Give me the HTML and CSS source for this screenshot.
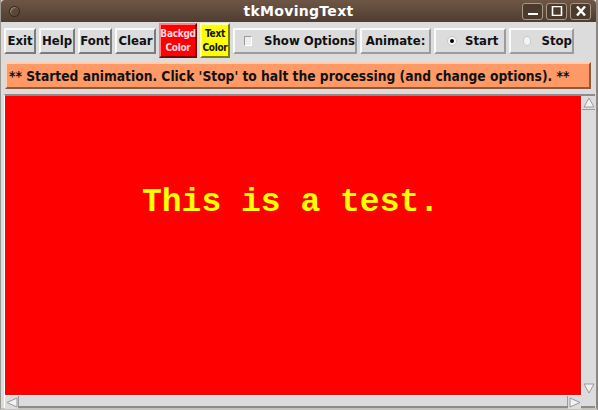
FILE: index.html
```html
<!DOCTYPE html>
<html lang="en">
<head>
	<meta charset="UTF-8">
	<title>tkMovingText</title>
	<link rel="stylesheet" href="styles.css">
</head>
<body>
	<div class="window">
		<div class="titlebar">
			<div class="tb_left"><span class="menu_dot"></span></div>
			<span class="title">tkMovingText</span>
			<div class="wm_btns">
				<span class="wm_btn">
					<svg width="12" height="10" viewBox="0 0 12 10"><rect x="1" y="7" width="10" height="2" fill="#fff"/></svg>
				</span>
				<span class="wm_btn">
					<svg width="12" height="10" viewBox="0 0 12 10"><rect x="1.5" y="0.5" width="9" height="9" fill="none" stroke="#fff" stroke-width="1.6"/></svg>
				</span>
				<span class="wm_btn">
					<svg width="12" height="10" viewBox="0 0 12 10"><path d="M2 0.5 L10 9.5 M10 0.5 L2 9.5" stroke="#fff" stroke-width="2.4"/></svg>
				</span>
			</div>
		</div>

		<div class="toolbar">
			<span class="btn w_exit">Exit</span>
			<span class="btn w_help">Help</span>
			<span class="btn w_font">Font</span>
			<span class="btn w_clear">Clear</span>
			<span class="btn two bg_red">Backgd<br>Color</span>
			<span class="btn two bg_yellow">Text<br>Color</span>
			<span class="btn check"><i class="box"></i>Show Options</span>
			<span class="btn label">Animate:</span>
			<span class="btn radio w_start"><i class="dot on"></i>Start</span>
			<span class="btn radio w_stop"><i class="dot"></i>Stop</span>
		</div>

		<div class="msg">** Started animation. Click 'Stop' to halt the processing (and change options). **</div>

		<div class="main">
			<div class="canvas">
				<span class="moving">This is a test.</span>
			</div>
			<div class="vscroll">
				<span class="arrow">
					<svg width="12" height="11" viewBox="0 0 12 11"><path d="M6 1 L11 10 L1 10 Z" fill="#f2f2f2" stroke="#9a9a9a"/></svg>
				</span>
				<span class="trough"></span>
				<span class="arrow">
					<svg width="12" height="11" viewBox="0 0 12 11"><path d="M6 10 L11 1 L1 1 Z" fill="#f2f2f2" stroke="#9a9a9a"/></svg>
				</span>
			</div>
			<div class="hscroll">
				<span class="arrow">
					<svg width="12" height="11" viewBox="0 0 12 11"><path d="M1 5.5 L11 1 L11 10 Z" fill="#f2f2f2" stroke="#9a9a9a"/></svg>
				</span>
				<span class="trough"></span>
				<span class="arrow">
					<svg width="12" height="11" viewBox="0 0 12 11"><path d="M11 5.5 L1 1 L1 10 Z" fill="#f2f2f2" stroke="#9a9a9a"/></svg>
				</span>
			</div>
			<div class="corner"></div>
		</div>
	</div>
</body>
</html>
```

FILE: styles.css
```css
*{margin:0;padding:0;box-sizing:border-box;}
body{background:#d8d4cc;font-family:"DejaVu Sans Condensed","DejaVu Sans",sans-serif;}
.window{width:598px;height:410px;background:#dcdcdc;border-left:1px solid #9c9890;border-right:2px solid #8c8880;border-bottom:2px solid #c8c2b8;display:flex;flex-direction:column;}

.titlebar{height:22px;background:linear-gradient(#6e5646,#4f3d30);display:grid;grid-template-columns:1fr auto 1fr;align-items:center;border-radius:4px 4px 0 0;}
.tb_left{display:flex;align-items:center;}
.menu_dot{width:11px;height:11px;border-radius:50%;border:1px solid #2e231b;background:#5b4838;box-shadow:inset 1px 1px 1px #a08a78;margin-left:8px;}
.title{text-align:center;color:#fff;font-family:"DejaVu Sans",sans-serif;font-weight:bold;font-size:14px;letter-spacing:0.3px;}
.wm_btns{display:flex;gap:3px;margin-right:5px;justify-self:end;}
.wm_btn{width:21px;height:17px;border:1px solid #a89888;border-radius:3px;background:#4c3a2d;display:flex;align-items:center;justify-content:center;}

.toolbar{display:flex;align-items:center;gap:3px;height:35px;margin-top:1px;padding:0 3px;}
.btn{height:26px;border:2px solid;border-color:#fafafa #7c7c7c #7c7c7c #fafafa;background:#dcdcdc;font-weight:bold;font-size:13px;color:#111;display:flex;align-items:center;justify-content:center;white-space:nowrap;}
.w_exit{width:32px;}
.w_help{width:36px;}
.w_font{width:34px;}
.w_clear{width:41px;}
.btn.two{height:35px;flex-direction:column;justify-content:center;text-align:center;font-size:10px;line-height:14px;letter-spacing:-0.3px;}
.bg_red{width:38px;background:#ff0000;color:#ffd8e0;border-color:#ff8080 #800000 #800000 #ff8080;}
.bg_yellow{width:30px;background:#ffff00;color:#111;border-color:#ffffa0 #808000 #808000 #ffffa0;}
.check{width:124px;justify-content:flex-start;padding-left:9px;border-color:#fafafa #9c9c9c #9c9c9c #fafafa;}
.box{width:10px;height:10px;border:1px solid;border-color:#9a9a9a #fff #fff #9a9a9a;background:#eeeeee;margin-right:12px;}
.label{width:71px;border-color:#fafafa #9c9c9c #9c9c9c #fafafa;}
.radio{justify-content:flex-start;padding-left:11px;border-color:#fafafa #9c9c9c #9c9c9c #fafafa;}
.w_start{width:72px;}
.w_stop{width:65px;padding-left:12px;}
.dot{width:10px;height:10px;border-radius:50%;background:#f4f4f4;border:1px solid #c8c8c8;margin-right:8px;position:relative;}
.w_stop .dot{margin-right:11px;}
.dot.on::after{content:"";position:absolute;left:2px;top:2px;width:4px;height:4px;border-radius:50%;background:#000;}

.msg{margin:4px 5px 0 4px;height:27px;background:#ff9966;border:2px solid;border-color:#ffd0b0 #8c5a3c #8c5a3c #ffd0b0;font-weight:bold;font-size:13.7px;color:#111;display:flex;align-items:center;padding-left:2px;white-space:nowrap;overflow:hidden;}

.main{flex:1;margin:5px 1px 0 3px;border-top:2px solid #8c8c8c;border-left:1px solid #fff;display:grid;grid-template-columns:1fr 14px;grid-template-rows:1fr 13px;}
.canvas{background:#ff0000;position:relative;overflow:hidden;}
.moving{position:absolute;left:137px;top:88px;font-family:"Liberation Mono",monospace;font-weight:bold;font-size:33px;color:#ffff00;}
.vscroll{background:#dcdcdc;display:flex;flex-direction:column;border-left:1px solid #fff;}
.hscroll{background:#dcdcdc;display:flex;border-top:1px solid #fff;border-bottom:2px solid #8c8c8c;}
.arrow{display:flex;align-items:center;justify-content:center;width:13px;height:13px;background:#dcdcdc;}
.trough{flex:1;}
.vscroll .trough{border-top:1px solid #9c9c9c;}
.hscroll .trough{border-left:1px solid #9c9c9c;border-right:1px solid #9c9c9c;}
.corner{background:#dcdcdc;border-bottom:2px solid #8c8c8c;}
```
